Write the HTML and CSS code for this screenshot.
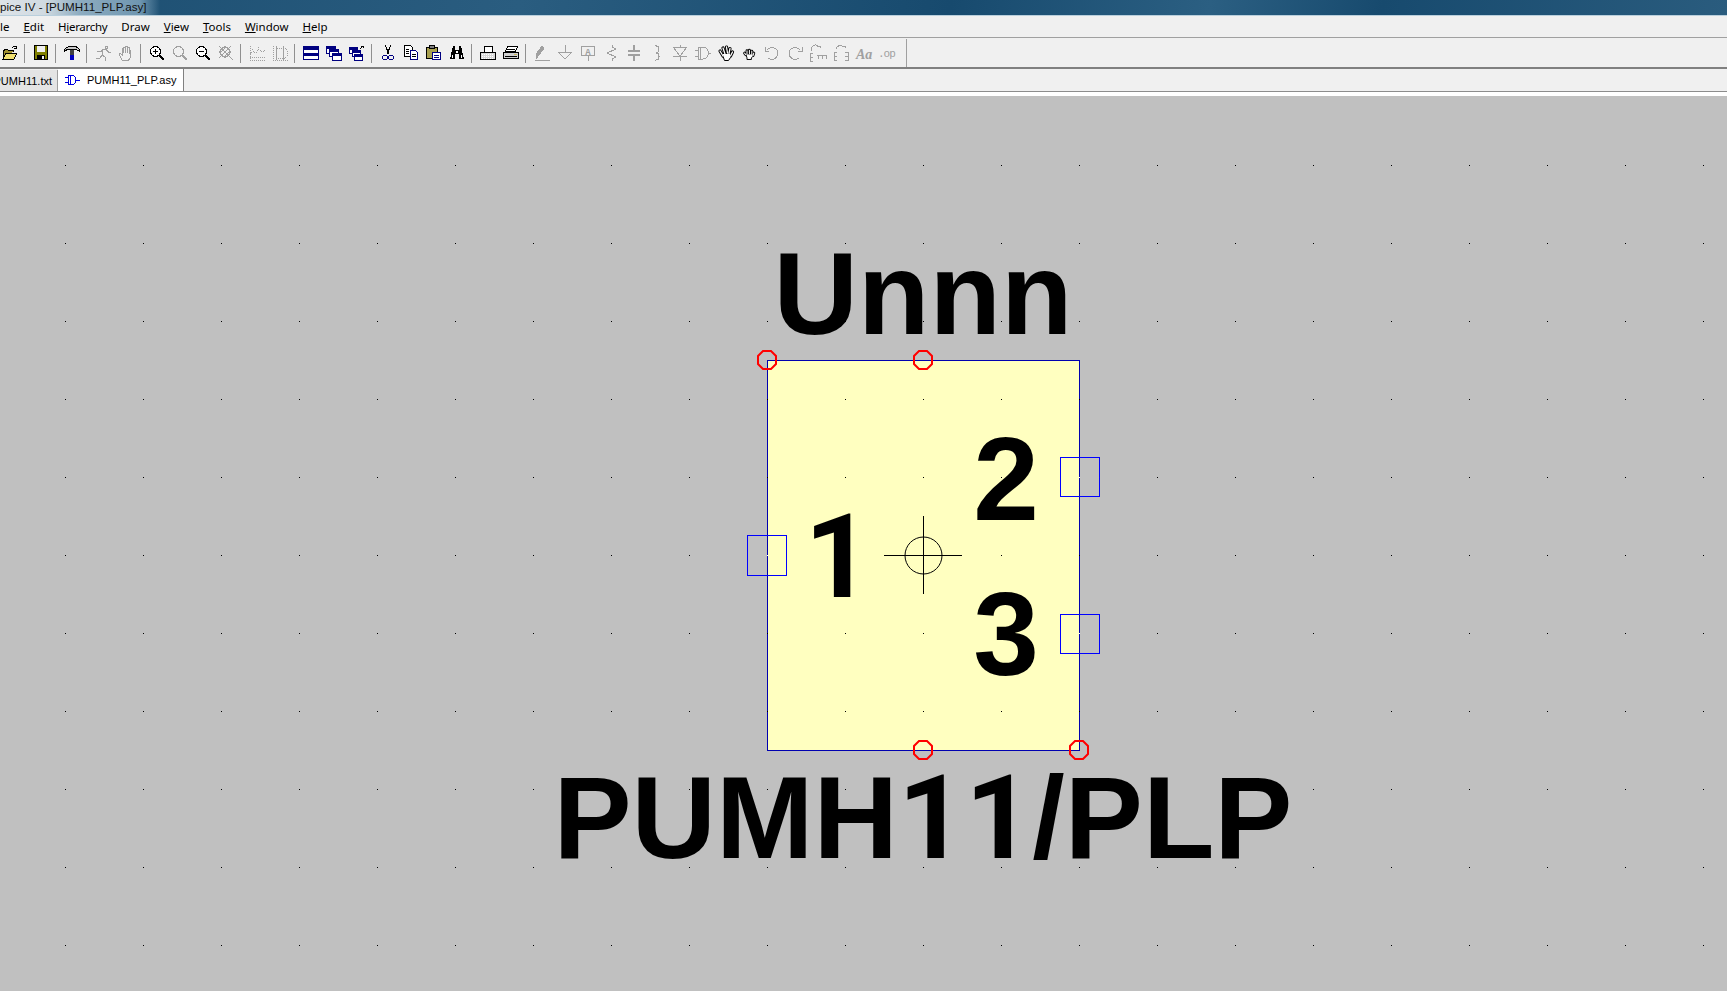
FILE: index.html
```html
<!DOCTYPE html>
<html>

<head>
    <meta charset="UTF-8">
    <title>LTspice IV - [PUMH11_PLP.asy]</title>
    <link rel="stylesheet" href="styles.css">
</head>

<body>
    <!-- title bar -->
    <div class="titlebar"><span class="title-text">pice IV - [PUMH11_PLP.asy]</span></div>

    <!-- menu -->
    <div class="menubar">
        <span class="menu-item first">le</span>
        <span class="menu-item"><u>E</u>dit</span>
        <span class="menu-item tight">H<u>i</u>erarchy</span>
        <span class="menu-item">Draw</span>
        <span class="menu-item"><u>V</u>iew</span>
        <span class="menu-item"><u>T</u>ools</span>
        <span class="menu-item"><u>W</u>indow</span>
        <span class="menu-item"><u>H</u>elp</span>
    </div>

    <!-- toolbar -->
    <div class="toolbar">
        <!-- open -->
        <div class="tool"><svg viewBox="0 0 16 16"><path d="M1 14V5h1V4h3l1 1h5v2" fill="#a09030" stroke="#000"/><path d="M1 14l3-6h11l-3 6z" fill="#f0e070" stroke="#000"/><path d="M10 3c1-2 3-2 4-1m0-1v2h-2" fill="none" stroke="#000"/></svg></div>
        <div class="sep"></div>
        <!-- save -->
        <div class="tool"><svg viewBox="0 0 16 16"><path d="M1.500 0.500h13v14h-13z" fill="#808000" stroke="#000"/><path d="M4 1h8v6H4z" fill="#f0f0f0"/><path d="M4 10h8v5H4z" fill="#000"/><path d="M9 11h2v3H9z" fill="#f0f0f0"/></svg></div>
        <div class="sep"></div>
        <!-- hammer -->
        <div class="tool"><svg viewBox="0 0 16 16"><path d="M0.500 6.500V4.500l2-2 3-1h6l2 1 2 2v2l-3-2H3z" fill="#c8c8c8" stroke="#000"/><path d="M6 5h4v5H6z" fill="#404040"/><path d="M6 10h4v5H6z" fill="#0000c0"/></svg></div>
        <div class="sep"></div>
        <!-- run -->
        <div class="tool"><svg viewBox="0 0 16 16"><g class="off"><path d="M10.500 1.500h2v2h-2zM2 6.500h4l2-2h3l3 3h2M8 5l-1 5 3 2v4M7 10l-2 3H1"/></g></svg></div>
        <!-- halt hand -->
        <div class="tool"><svg viewBox="0 0 16 16"><g class="off"><path d="M4 15l-3-6 1-1 2 2V3h1v5-6h2v6-7h2v7-6h2v7-4h1v8l-2 3z"/></g></svg></div>
        <div class="sep"></div>
        <!-- zoom in -->
        <div class="tool"><svg viewBox="0 0 16 16"><circle cx="6.500" cy="6.500" r="5" fill="#fff" stroke="#000"/><path d="M4 6.500h5M6.500 4v5" stroke="#000" fill="none"/><path d="M10 10l5 5" stroke="#000" stroke-width="2" fill="none"/></svg></div>
        <!-- zoom fit -->
        <div class="tool"><svg viewBox="0 0 16 16"><g class="off"><circle cx="6.500" cy="6.500" r="5"/><path d="M10 10l5 5" stroke-width="2"/></g></svg></div>
        <!-- zoom out -->
        <div class="tool"><svg viewBox="0 0 16 16"><circle cx="6.500" cy="6.500" r="5" fill="#fff" stroke="#000"/><path d="M4 6.500h5" stroke="#000" fill="none"/><path d="M10 10l5 5" stroke="#000" stroke-width="2" fill="none"/></svg></div>
        <!-- zoom cancel -->
        <div class="tool"><svg viewBox="0 0 16 16"><g class="off"><circle cx="7" cy="7" r="5" stroke-width="1.500"/><path d="M1 1l12 12M13 1L1 13M10 10l5 5M3 7l4-4M7 11l4-4" stroke-width="1.300"/></g></svg></div>
        <div class="sep"></div>
        <!-- autoscale -->
        <div class="tool"><svg viewBox="0 0 16 16"><g class="off"><path d="M1 1v14h15M1 9l3-3 3 2 3-4 3 3 3-2M1 12h15M3 4h2M9 2h2" stroke-dasharray="1 1"/></g></svg></div>
        <div class="tool"><svg viewBox="0 0 16 16"><g class="off"><path d="M1 1v14h15M5 3h8l2 2v6l-2 2H5" stroke-dasharray="1 1"/><path d="M4 1v14M11 1v14"/></g></svg></div>
        <div class="sep"></div>
        <!-- window tile -->
        <div class="tool"><svg viewBox="0 0 16 16"><path d="M0.500 1.500h15v13H0.500z" fill="#fff" stroke="#000080"/><path d="M1 2h14v3H1zM1 8h14v3H1z" fill="#000080"/></svg></div>
        <div class="tool"><svg viewBox="0 0 16 16"><path d="M0.500 1.500h9v7h-9z" fill="#fff" stroke="#000080"/><path d="M3.500 4.500h9v7h-9z" fill="#fff" stroke="#000080"/><path d="M6.500 8.500h9v7h-9z" fill="#fff" stroke="#000080"/><path d="M1 2h8v2H1zM4 5h8v2H4zM7 9h8v2H7z" fill="#000080"/></svg></div>
        <div class="tool"><svg viewBox="0 0 16 16"><path d="M0.500 2.500h8v6h-8z" fill="#fff" stroke="#000080"/><path d="M3.500 5.500h8v6h-8z" fill="#fff" stroke="#000080"/><path d="M5.500 9.500h8v6h-8z" fill="#fff" stroke="#000080"/><path d="M1 3h7v2H1zM4 6h7v2H4zM6 10h7v2H6z" fill="#000080"/><path d="M11 4l3-3m-2 0h2v2" fill="none" stroke="#000"/></svg></div>
        <div class="sep"></div>
        <!-- cut -->
        <div class="tool"><svg viewBox="0 0 16 16"><path d="M5 0l4 9M11 0L7 9" fill="none" stroke="#000"/><circle cx="5" cy="12.500" r="2.500" fill="none" stroke="#000080"/><circle cx="11" cy="12.500" r="2.500" fill="none" stroke="#000080"/></svg></div>
        <!-- copy -->
        <div class="tool"><svg viewBox="0 0 16 16"><path d="M1.500 0.500h6l2 2v9h-8z" fill="#fff" stroke="#000"/><path d="M7.500 5.500h5l2 2v7h-7z" fill="#fff" stroke="#000080"/><path d="M3 4h3M3 6h3M3 8h3M9 9h4M9 11h4" stroke="#000" fill="none"/></svg></div>
        <!-- paste -->
        <div class="tool"><svg viewBox="0 0 16 16"><path d="M0.500 2.500h11v11h-11z" fill="#a8a050" stroke="#000"/><path d="M3.500 0.500h5v3h-5z" fill="#808080" stroke="#000"/><path d="M6.500 7.500h8v7h-8z" fill="#fff" stroke="#000080"/><path d="M8 10h5M8 12h5" stroke="#000080" fill="none"/></svg></div>
        <!-- find -->
        <div class="tool"><svg viewBox="0 0 16 16"><path d="M4 1h2v4h4V1h2l3 13h-5V9H6v5H1z" fill="#000"/><path d="M3 10h1v3H3zM12 10h1v3h-1zM7 6h2v2H7z" fill="#fff"/></svg></div>
        <div class="sep"></div>
        <!-- print preview -->
        <div class="tool"><svg viewBox="0 0 16 16"><path d="M4.500 1.500h8v6h-8z" fill="#fff" stroke="#000"/><path d="M0.500 7.500h15v7h-15z" fill="#d8d8d8" stroke="#000"/><path d="M2 9h12M2 11h12M2 13h12" stroke="#fff" stroke-dasharray="1 1" fill="none"/></svg></div>
        <!-- print -->
        <div class="tool"><svg viewBox="0 0 16 16"><path d="M4.500 1.500h10l-2 5h-10z" fill="#fff" stroke="#000"/><path d="M3 4h9M3 6h8" stroke="#000" fill="none"/><path d="M0.500 7.500h15v6h-15z" fill="#d0d0d0" stroke="#000"/><path d="M2 11h12" stroke="#000" fill="none"/><path d="M11 9h3" stroke="#c8b560" fill="none"/></svg></div>
        <div class="sep"></div>
        <!-- wire -->
        <div class="tool"><svg viewBox="0 0 16 16"><g class="off"><path d="M1 15h15"/><path d="M2 14l1-6 5-7 2 2-5 7z" fill="#a0a0a0"/></g></svg></div>
        <!-- ground -->
        <div class="tool"><svg viewBox="0 0 16 16"><g class="off"><path d="M8 0v7M1 7h14M1 7l7 7 7-7"/></g></svg></div>
        <!-- label -->
        <div class="tool"><svg viewBox="0 0 16 16"><g class="off"><path d="M1.500 1.500h13v9h-13zM8 11v5"/></g><text class="icon-a" x="8" y="9.500">A</text></svg></div>
        <!-- resistor -->
        <div class="tool"><svg viewBox="0 0 16 16"><g class="off"><path d="M9 0v2l4 2-9 4 9 4-4 2v2"/></g></svg></div>
        <!-- capacitor -->
        <div class="tool"><svg viewBox="0 0 16 16"><g class="off"><path d="M8 0v6M2 6h12M2 10h12M8 10v6" stroke-width="1.500"/></g></svg></div>
        <!-- inductor -->
        <div class="tool"><svg viewBox="0 0 16 16"><g class="off"><path d="M6 0h1v1c4 0 4 6 0 7 4 0 4 7 0 7H6v1"/></g></svg></div>
        <!-- diode -->
        <div class="tool"><svg viewBox="0 0 16 16"><g class="off"><path d="M8 0v2M1 2h14M1 2l7 9 7-9M1 11h14M8 11v5"/></g></svg></div>
        <!-- gate -->
        <div class="tool"><svg viewBox="0 0 16 16"><g class="off"><path d="M0 5h3M0 11h3M13 8h3M3 2h5c7 0 7 12 0 12H3zM5 2v12"/></g></svg></div>
        <!-- move hand -->
        <div class="tool"><svg class="smooth" viewBox="0 0 16 16"><path d="M2 6l3 5M5 3l2 6M8.500 2l1 6M12 3.500l-1 5M14.500 7l-2 4" stroke="#000" stroke-width="3.200" stroke-linecap="round" fill="none"/><path d="M4 8.500h8.500v4l-2 3h-4z" fill="#fff" stroke="#000"/><path d="M2 6l3 5M5 3l2 6M8.500 2l1 6M12 3.500l-1 5M14.500 7l-2 4" stroke="#fff" stroke-width="1.300" stroke-linecap="round" fill="none"/></svg></div>
        <!-- drag hand -->
        <div class="tool"><svg class="smooth" viewBox="0 0 16 16"><g transform="translate(1.600 2.500) scale(.8)"><path d="M2.500 7l1.500 2M5.500 4v4M8.500 3.500v4M11.500 4.500v4M14 7l-1 3" stroke="#000" stroke-width="3.600" stroke-linecap="round" fill="none"/><path d="M4 8h9v3l-2 2v2H5.500v-2z" fill="#fff" stroke="#000" stroke-width="1.200"/><path d="M2.500 7l1.500 2M5.500 4v4M8.500 3.500v4M11.500 4.500v4M14 7l-1 3" stroke="#fff" stroke-width="1.300" stroke-linecap="round" fill="none"/></g></svg></div>
        <!-- undo -->
        <div class="tool"><svg viewBox="0 0 16 16"><g class="off"><path d="M3 5a6 6 0 1 1 1 8M1 2v4h4"/></g></svg></div>
        <!-- redo -->
        <div class="tool"><svg viewBox="0 0 16 16"><g class="off"><path d="M13 5a6 6 0 1 0-1 8M15 2v4h-4"/></g></svg></div>
        <!-- rotate -->
        <div class="tool"><svg viewBox="0 0 16 16"><g class="off"><path d="M2 6a4 4 0 0 1 7-4M7 1h3v2M3 8H0v8h3M0 12h3M7 10h9M8 10v4M12 10v4M16 10v4"/></g></svg></div>
        <!-- mirror -->
        <div class="tool"><svg viewBox="0 0 16 16"><g class="off"><path d="M3 4a4 4 0 0 1 7-2M9 1h3v2M4 7H1v8h3M1 11h3M12 7h3v8h-3M15 11h-3"/></g></svg></div>
        <!-- text -->
        <div class="tool"><svg viewBox="0 0 16 16"><text class="icon-aa" x="0" y="14">Aa</text></svg></div>
        <!-- spice directive -->
        <div class="tool"><svg viewBox="0 0 16 16"><text class="icon-op" x="-1" y="12">.op</text></svg></div>
        <div class="sep end"></div>
    </div>

    <!-- tabs -->
    <div class="tabbar">
        <div class="tab"><span class="tab-clip">PUMH11.txt</span></div>
        <div class="tab active">
            <svg class="tab-icon" viewBox="0 0 16 10"><path d="M0 2.500h3M0 7.500h3M11 5h4M3.500 0.500h4c4 0 4 9 0 9h-4zM5 1v8" fill="none" stroke="#0000e0"/></svg>
            <span>PUMH11_PLP.asy</span>
        </div>
    </div>

    <!-- schematic sheet -->
    <svg class="sheet" viewBox="0 96 1727 895">
        <defs>
            <pattern id="grid" x="65" y="9" width="78" height="78" patternUnits="userSpaceOnUse">
                <rect width="1" height="1" fill="#000"></rect>
            </pattern>
        </defs>
        <rect class="body" x="767.500" y="360.500" width="312" height="390"></rect>
        <rect x="0" y="96" width="1727" height="895" fill="url(#grid)"></rect>

        <text class="label" x="923" y="334">Unnn</text>
        <text class="label" x="923" y="858">PUMH<tspan class="one">11</tspan>/PLP</text>
        <text class="label one" x="838" y="597">1</text>
        <text class="label digit" x="1006" y="520">2</text>
        <text class="label digit" x="1006" y="675">3</text>

        <rect class="pin" x="747.500" y="535.500" width="39" height="40"></rect>
        <rect class="pin" x="1060.500" y="457.500" width="39" height="39"></rect>
        <rect class="pin" x="1060.500" y="614.500" width="39" height="39"></rect>
        <rect class="pin-dot" x="767" y="555" width="1" height="1"></rect>
        <rect class="pin-dot" x="1079" y="477" width="1" height="1"></rect>
        <rect class="pin-dot" x="1079" y="633" width="1" height="1"></rect>

        <path class="cross" d="M884 555.500h78M923.500 516v78"></path>
        <circle class="cross-ring" cx="923.500" cy="555.500" r="18.500"></circle>

        <polygon class="handle" points="763,351 771,351 776,356 776,364 771,369 763,369 758,364 758,356"></polygon>
        <polygon class="handle" points="919,351 927,351 932,356 932,364 927,369 919,369 914,364 914,356"></polygon>
        <polygon class="handle" points="919,741 927,741 932,746 932,754 927,759 919,759 914,754 914,746"></polygon>
        <polygon class="handle" points="1075,741 1083,741 1088,746 1088,754 1083,759 1075,759 1070,754 1070,746"></polygon>
    </svg>
</body>

</html>
```
FILE: styles.css
```css
* {
    box-sizing: border-box;
}

html,
body {
    height: 100%;
}

body {
    margin: 0;
    overflow: hidden;
    display: flex;
    flex-direction: column;
    background-color: #fff;
    font-family: "Liberation Sans", Arial, sans-serif;
    color: #000;
}

/* title bar */
.titlebar {
    height: 16px;
    flex: none;
    background:
        linear-gradient(90deg, #dde3e8 0, #d0dae1 45px, #8dacc0 80px, #6f96b0 140px, rgba(70, 115, 145, 0) 160px),
        linear-gradient(100deg, #1b4d70 0%, #2a5d80 30%, #174a6e 55%, #2b5f82 70%, #174a6e 80%, #2a5c7e 100%);
    border-bottom: 1px solid #b9cfdc;
    font-size: 11.6px;
    line-height: 13px;
    color: #111;
    white-space: nowrap;
}

/* menu */
.menubar {
    height: 22px;
    flex: none;
    display: flex;
    align-items: center;
    background-color: #f0f0f0;
    border-bottom: 1px solid #a0a0a0;
    font-family: "Noto Sans", sans-serif;
    font-size: 11.5px;
    white-space: nowrap;
}

.menu-item {
    padding: 0 7px;
}

.menu-item.first {
    padding: 0 7px 0 0;
}

.menu-item.tight {
    letter-spacing: -0.3px;
}

/* toolbar */
.toolbar {
    height: 31px;
    flex: none;
    display: flex;
    align-items: center;
    margin-left: -2px;
    padding-top: 1px;
    background-color: #f0f0f0;
    border-bottom: 2px solid #808080;
    width: calc(100% + 2px);
}

.tool {
    width: 23px;
    height: 16px;
    flex: none;
    display: flex;
    justify-content: center;
}

.tool svg {
    width: 16px;
    height: 16px;
    overflow: visible;
    shape-rendering: crispEdges;
}

.tool svg.smooth {
    shape-rendering: auto;
}

.off {
    fill: none;
    stroke: #a0a0a0;
}

.icon-a {
    font-family: "Liberation Mono", monospace;
    font-size: 9px;
    font-weight: bold;
    text-anchor: middle;
    fill: #a0a0a0;
}

.icon-aa {
    font-family: "Liberation Serif", serif;
    font-size: 14px;
    font-style: italic;
    font-weight: bold;
    fill: #a0a0a0;
}

.icon-op {
    font-family: "Liberation Mono", monospace;
    font-size: 11px;
    letter-spacing: -1px;
    fill: #a0a0a0;
}

.sep {
    width: 8px;
    height: 19px;
    flex: none;
    border-left: 1px solid #909090;
    margin-left: 3px;
    margin-right: -3px;
}

.sep.end {
    height: 28px;
    margin-left: 8px;
    border-left-color: #a0a0a0;
}

/* tabs */
.tabbar {
    height: 23px;
    flex: none;
    display: flex;
    align-items: flex-start;
    background-color: #f0f0f0;
    border-bottom: 1px solid #8c8c8c;
    font-size: 11px;
    white-space: nowrap;
}

.tab {
    height: 21px;
    margin-top: 1px;
    width: 58px;
    overflow: hidden;
    display: flex;
    align-items: center;
    justify-content: flex-end;
    padding-right: 5px;
    background-color: #e4e4e4;
    border-right: 1px solid #a0a0a0;
}

.tab-clip {
    flex: none;
}

.tab.active {
    height: 22px;
    margin-top: 0;
    width: 126px;
    justify-content: flex-start;
    gap: 6px;
    padding: 0 0 0 7px;
    background-color: #fff;
    border-right: 1px solid #808080;
}

.tab-icon {
    width: 16px;
    height: 10px;
    flex: none;
    shape-rendering: crispEdges;
}

/* schematic sheet */
.sheet {
    display: block;
    flex: none;
    width: 1727px;
    height: 895px;
    margin-top: 4px;
    background-color: #c0c0c0;
}

.body {
    fill: #ffffc0;
    stroke: #0000b0;
    shape-rendering: crispEdges;
}

.label {
    font-family: "Liberation Sans", Arial, sans-serif;
    font-size: 117px;
    font-weight: bold;
    text-anchor: middle;
    fill: #000;
}

.label.digit {
    font-size: 118px;
}

.one {
    font-family: Roboto, sans-serif;
}

.pin {
    fill: none;
    stroke: #0000ff;
    shape-rendering: crispEdges;
}

.pin-dot {
    fill: #fff;
}

.cross {
    fill: none;
    stroke: #000;
    shape-rendering: crispEdges;
}

.cross-ring {
    fill: none;
    stroke: #000;
}

.handle {
    fill: none;
    stroke: #ff0000;
    stroke-width: 2;
}
```
